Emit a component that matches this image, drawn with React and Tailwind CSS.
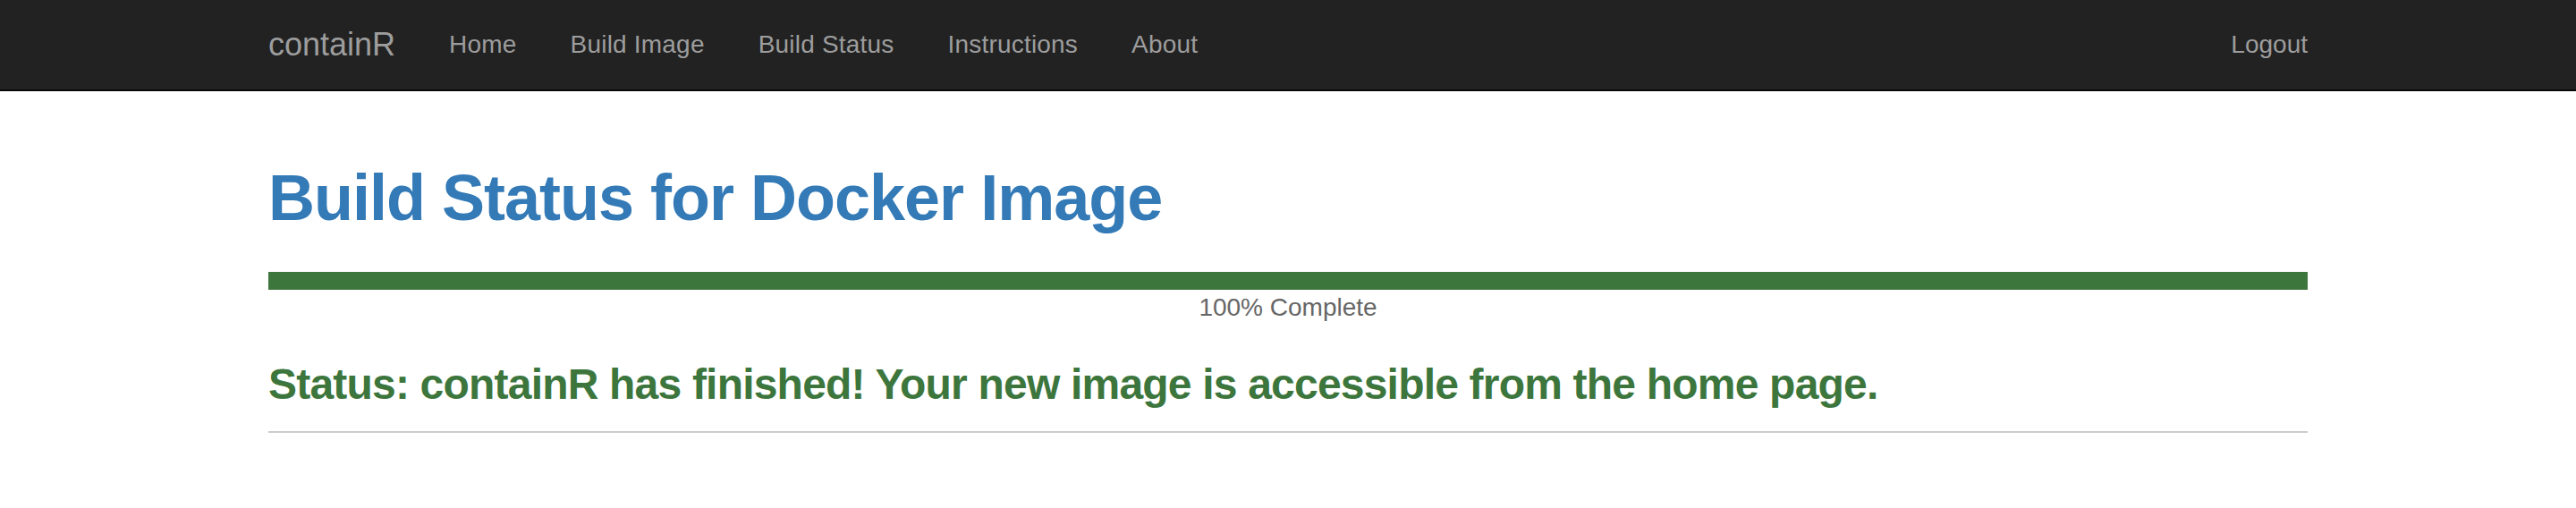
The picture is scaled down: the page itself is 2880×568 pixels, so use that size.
import React from 'react'

const links = ['Home', 'Build Image', 'Build Status', 'Instructions', 'About']

const Navbar = () => {
  return (
    <nav className="bg-[#222222] border-b-2 border-[#080808] h-[102px]">
      <div className="max-w-[2340px] mx-auto px-[30px] flex items-start justify-between">
        <div className="flex">
          {/* Brand */}
          <a className="text-[36px] leading-[40px] py-[30px] pr-[30px] text-[#9d9d9d]">containR</a>
          <ul className="flex">
            {links.map((l) => (
              <li key={l}>
                <a className="block text-[28px] leading-[40px] py-[30px] px-[30px] text-[#9d9d9d] tracking-[0.2px]">{l}</a>
              </li>
            ))}
          </ul>
        </div>
        <a className="block text-[28px] leading-[40px] py-[30px] text-[#9d9d9d]">Logout</a>
      </div>
    </nav>
  )
}

const App = () => {
  return (
    <div className="min-h-[568px] bg-white font-['Liberation_Sans',Arial,sans-serif]">
      <Navbar />
      <main className="max-w-[2340px] mx-auto px-[30px]">
        {/* Heading */}
        <h1 className="mt-[80px] text-[72px] leading-[1.1] font-bold tracking-[-1px] text-[#337ab7]">
          Build Status for Docker Image
        </h1>

        {/* Progress */}
        <div className="mt-[43px] h-[20px] bg-[#3c763d]"></div>
        <p className="mt-0 text-center text-[28px] leading-[40px] text-[#666666]">100% Complete</p>

        {/* Status */}
        <h3 className="mt-[40px] text-[48px] leading-[1.1] font-bold tracking-[-0.8px] text-[#3c763d]">
          Status: containR has finished! Your new image is accessible from the home page.
        </h3>
        <hr className="mt-[25px] border-t-2 border-[#cccccc]" />
      </main>
    </div>
  )
}

export default App
